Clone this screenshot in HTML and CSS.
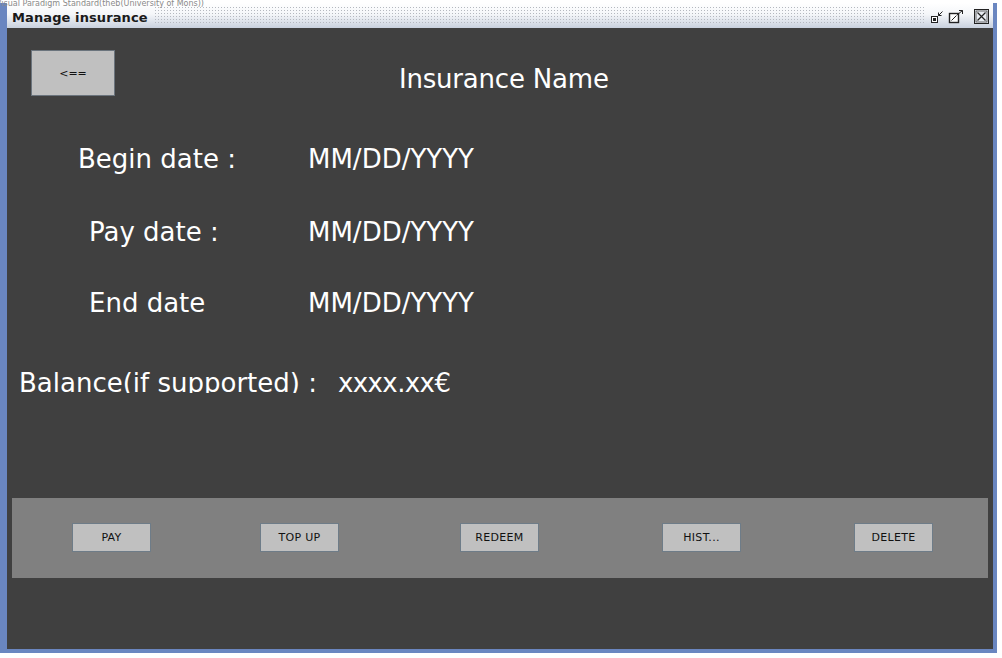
FILE: index.html
```html
<!DOCTYPE html>
<html>
<head>
<meta charset="utf-8">
<link rel="stylesheet" href="styles.css">
</head>
<body>
<div class="window">
  <div class="titlebar">
    <span class="title">Manage insurance</span>
    <div class="dots"></div>
    <div class="controls">
      <svg class="ctl" width="14" height="14" viewBox="0 0 14 14">
        <rect x="1.5" y="6.5" width="6" height="6" fill="#fff" stroke="#222" stroke-width="1"/>
        <rect x="3" y="8" width="3" height="3" fill="#222"/>
        <path d="M12.5 1.5 L8.5 5.5 M8.5 2.5 L8.5 5.5 L11.5 5.5" fill="none" stroke="#222" stroke-width="1"/>
      </svg>
      <svg class="ctl" width="16" height="14" viewBox="0 0 16 14">
        <rect x="1.5" y="3.5" width="9" height="9" fill="#fff" stroke="#222" stroke-width="1.4"/>
        <path d="M3.5 10.5 L8.5 5.5" stroke="#222" stroke-width="1"/>
        <path d="M9 5 L14.5 0.5 M11 0.5 L14.5 0.5 L14.5 4" fill="none" stroke="#222" stroke-width="1"/>
      </svg>
      <svg class="ctl close" width="15" height="15" viewBox="0 0 15 15">
        <rect x="0.5" y="0.5" width="14" height="14" fill="#e8ecf2" stroke="#222" stroke-width="1"/>
        <rect x="2" y="2" width="11" height="11" fill="none" stroke="#444" stroke-width="0.8"/>
        <path d="M3.5 3.5 L11.5 11.5 M11.5 3.5 L3.5 11.5" stroke="#222" stroke-width="1.2"/>
      </svg>
    </div>
  </div>
  <div class="content">
    <div class="header">
      <div class="back-btn">&lt;==</div>
      <div class="heading">Insurance Name</div>
    </div>
    <div class="row row-begin">
      <span class="label label-begin">Begin date :</span>
      <span class="value">MM/DD/YYYY</span>
    </div>
    <div class="row row-pay">
      <span class="label label-pay">Pay date :</span>
      <span class="value">MM/DD/YYYY</span>
    </div>
    <div class="row row-end">
      <span class="label label-end">End date</span>
      <span class="value">MM/DD/YYYY</span>
    </div>
    <div class="row row-balance">
      <span class="label label-balance">Balance(if supported) :</span>
      <span class="value value-balance">xxxx.xx€</span>
    </div>
    <div class="actions">
      <div class="btn btn-pay">PAY</div>
      <div class="btn btn-topup">TOP UP</div>
      <div class="btn btn-redeem">REDEEM</div>
      <div class="btn btn-hist">HIST...</div>
      <div class="btn btn-delete">DELETE</div>
    </div>
  </div>
  <div class="watermark">Visual Paradigm Standard(theb(University of Mons))</div>
</div>
</body>
</html>
```

FILE: styles.css
```css
* { box-sizing: border-box; }
html, body {
  margin: 0;
  padding: 0;
  background: #ffffff;
  font-family: "DejaVu Sans", sans-serif;
}
.window {
  position: relative;
  width: 997px;
  height: 650px;
  margin-top: 3px;
  background: #6a86c0;
  padding: 0 4px 4px 7px;
  display: flex;
  flex-direction: column;
}
.titlebar {
  height: 25px;
  display: flex;
  align-items: center;
  background: linear-gradient(#ffffff 0%, #f4f6f9 45%, #c9d1de 100%);
}
.title {
  font-size: 13px;
  font-weight: bold;
  color: #1a1a1a;
  padding: 3px 6px 0 5px;
  letter-spacing: 0.1px;
}
.dots {
  flex: 1;
  align-self: stretch;
  margin: 3px 6px 3px 0;
  background-image: radial-gradient(circle, #b4b8bf 0.8px, transparent 1px);
  background-size: 3px 3px;
}
.controls {
  display: flex;
  align-items: center;
  gap: 4px;
  padding: 2px 4px 0 0;
}
.ctl { display: block; }
.ctl.close { margin-left: 6px; }
.content {
  flex: 1;
  background: #404040;
  color: #ffffff;
  display: flex;
  flex-direction: column;
}
.header {
  display: flex;
  align-items: flex-start;
  padding: 22px 0 0 24px;
}
.back-btn {
  width: 84px;
  height: 46px;
  background: #c0c0c0;
  border: 1px solid #6b747d;
  color: #111;
  font-size: 11px;
  display: flex;
  align-items: center;
  justify-content: center;
}
.heading {
  margin: 14px 0 0 284px;
  font-size: 26px;
  line-height: 30px;
  letter-spacing: -0.2px;
  white-space: nowrap;
}
.row {
  display: flex;
  font-size: 26px;
  line-height: 30px;
  white-space: nowrap;
}
.row-begin { margin-top: 48px; }
.row-pay { margin-top: 43px; }
.row-end { margin-top: 41px; }
.row-balance { margin-top: 50px; }
.label { display: block; }
.label-begin { margin-left: 71px; width: 230px; }
.label-pay { margin-left: 82px; width: 219px; }
.label-end { margin-left: 82px; width: 219px; }
.label-balance { margin-left: 12px; width: 319px; height: 25px; overflow: hidden; }
.value { display: block; }
.value-balance { height: 26px; overflow: hidden; font-weight: 500; letter-spacing: -0.6px; }
.actions {
  margin: 104px 5px 0 5px;
  height: 80px;
  background: #808080;
  display: flex;
  align-items: flex-start;
  padding: 25px 0 0 60px;
}
.btn {
  width: 79px;
  height: 29px;
  background: #c0c0c0;
  border: 1px solid #6e7c88;
  color: #111;
  font-size: 11px;
  display: flex;
  align-items: center;
  justify-content: center;
  letter-spacing: 0.3px;
}
.btn-topup { margin-left: 109px; }
.btn-redeem { margin-left: 121px; }
.btn-hist { margin-left: 123px; }
.btn-delete { margin-left: 113px; }
.watermark {
  position: absolute;
  top: -4px;
  left: -4px;
  font-size: 8px;
  color: #8a8a8a;
  white-space: nowrap;
  pointer-events: none;
}
```
